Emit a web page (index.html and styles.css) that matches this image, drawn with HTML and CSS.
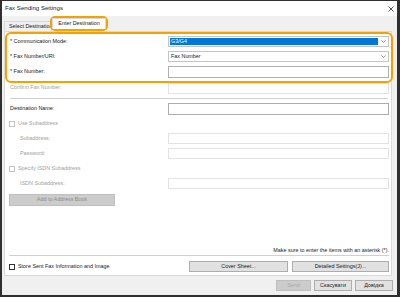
FILE: index.html
```html
<!DOCTYPE html>
<html lang="en">
<head>
    <meta charset="UTF-8">
    <title>Fax Sending Settings</title>
    <link rel="stylesheet" href="styles.css">
</head>
<body>
    <div class="window">
        <div class="titlebar">
            <span class="title">Fax Sending Settings</span>
            <svg class="close" width="6" height="6" viewBox="0 0 6 6">
                <path d="M0.5 0.5 L5.5 5.5 M5.5 0.5 L0.5 5.5" stroke="#444" stroke-width="0.9"/>
            </svg>
        </div>

        <div class="dialog">
            <div class="tabs">
                <div class="tab">Select Destination</div>
                <div class="tab-mark">
                    <div class="tab tab-active">Enter Destination</div>
                </div>
            </div>

            <div class="panel">
                <div class="mark-box">
                    <div class="row">
                        <span class="label">* Communication Mode:</span>
                        <div class="select select-focus">
                            <span class="select-value">G3/G4</span>
                            <svg class="arrow" width="5" height="3" viewBox="0 0 5 3"><path d="M0.3 0.3 L2.5 2.5 L4.7 0.3" fill="none" stroke="#777" stroke-width="0.7"/></svg>
                        </div>
                    </div>
                    <div class="row">
                        <span class="label">* Fax Number/URI:</span>
                        <div class="select">
                            <span class="select-value">Fax Number</span>
                            <svg class="arrow" width="5" height="3" viewBox="0 0 5 3"><path d="M0.3 0.3 L2.5 2.5 L4.7 0.3" fill="none" stroke="#777" stroke-width="0.7"/></svg>
                        </div>
                    </div>
                    <div class="row">
                        <span class="label">* Fax Number:</span>
                        <div class="input input-tall"></div>
                    </div>
                </div>

                <div class="section">
                    <div class="row row-confirm disabled">
                        <span class="label">Confirm Fax Number:</span>
                        <div class="input"></div>
                    </div>

                    <div class="sep"></div>

                    <div class="row">
                        <span class="label">Destination Name:</span>
                        <div class="input input-tall"></div>
                    </div>
                    <div class="row disabled">
                        <span class="check-label"><span class="checkbox"></span>Use Subaddress</span>
                    </div>
                    <div class="row disabled">
                        <span class="label label-sub">Subaddress:</span>
                        <div class="input"></div>
                    </div>
                    <div class="row disabled">
                        <span class="label label-sub">Password:</span>
                        <div class="input"></div>
                    </div>
                    <div class="row disabled">
                        <span class="check-label"><span class="checkbox"></span>Specify ISDN Subaddress</span>
                    </div>
                    <div class="row disabled">
                        <span class="label label-sub">ISDN Subaddress:</span>
                        <div class="input"></div>
                    </div>

                    <div class="btn btn-disabled btn-book">Add to Address Book</div>
                </div>

                <div class="footer">
                    <div class="note">Make sure to enter the items with an asterisk (*).</div>
                    <div class="sep sep-footer"></div>
                    <div class="footer-row">
                        <span class="check-label check-store"><span class="checkbox"></span>Store Sent Fax Information and Image</span>
                        <div class="btn btn-cover">Cover Sheet...</div>
                        <div class="btn btn-detail">Detailed Settings(J)...</div>
                    </div>
                </div>
            </div>

            <div class="dialog-buttons">
                <div class="btn btn-disabled btn-send">Send</div>
                <div class="btn btn-bottom">Скасувати</div>
                <div class="btn btn-bottom">Довідка</div>
            </div>
        </div>
    </div>
</body>
</html>
```

FILE: styles.css
```css
body {
    margin: 0;
    background: #2b2b2b;
    font-family: "Liberation Sans", Arial, sans-serif;
    font-size: 5.4px;
    line-height: 1;
    color: #1a1a1a;
}

.window {
    width: 400px;
    height: 297px;
    box-sizing: border-box;
    border-style: solid;
    border-color: #2f2f2f;
    border-width: 1px 3px 2px 2px;
    background: #f0f0f0;
    display: flex;
    flex-direction: column;
}

.titlebar {
    height: 15px;
    background: #fff;
    display: flex;
    align-items: center;
    justify-content: space-between;
    padding: 0 3px 0 3px;
}

.title {
    font-size: 6.1px;
    color: #222;
}

.close {
    display: block;
}

.dialog {
    flex: 1;
    display: flex;
    flex-direction: column;
    padding: 0 5px 0 2px;
}

/* tabs */
.tabs {
    height: 15px;
    display: flex;
    align-items: flex-end;
}

.tab {
    box-sizing: border-box;
    height: 10px;
    width: 48px;
    padding-left: 4px;
    border: 1px solid #d9d9d9;
    border-bottom: none;
    background: #f0f0f0;
    white-space: nowrap;
    overflow: hidden;
    display: flex;
    align-items: center;
}

.tab-mark {
    box-sizing: border-box;
    height: 15px;
    width: 58px;
    margin-left: -2px;
    border: 2px solid #f5a200;
    border-radius: 5px;
    position: relative;
    z-index: 2;
}

.tab-active {
    width: 54px;
    height: 11px;
    padding: 0;
    justify-content: center;
    background: #fff;
}

/* main panel */
.panel {
    box-sizing: border-box;
    height: 245px;
    background: #fff;
    border: 1px solid #d9d9d9;
    display: flex;
    flex-direction: column;
    padding-bottom: 3px;
}

.mark-box {
    box-sizing: border-box;
    margin-right: -2px;
    border: 2px solid #f5a200;
    border-radius: 6px;
    padding: 0 2px 2px 3px;
    position: relative;
    z-index: 1;
}

.section {
    padding: 0 2px 0 5px;
}

.row {
    height: 15px;
    display: flex;
    align-items: center;
}

.row-confirm {
    height: 12px;
    margin-top: -1px;
}

.label {
    flex: 1;
    white-space: nowrap;
}

.label-sub {
    padding-left: 10px;
}

.disabled {
    color: #a0a0a0;
}

.select,
.input {
    box-sizing: border-box;
    width: 221px;
    height: 11px;
    background: #fff;
}

.select {
    border: 1px solid #c4c4c4;
    display: flex;
    align-items: center;
    padding: 1px 2px 1px 1px;
}

.select-value {
    flex: 1;
    height: 100%;
    display: flex;
    align-items: center;
    padding-left: 1px;
}

.select-focus .select-value {
    background: #0078d7;
    color: #fff;
    margin-right: 3px;
}

.arrow {
    display: block;
}

.input {
    border: 1px solid #adadad;
}

.input-tall {
    height: 12px;
}

.disabled .input {
    border-color: #e3e3e3;
}

.sep {
    height: 1px;
    background: #d0d0d0;
    margin: 4px 1px 2px 0;
}

.check-label {
    display: flex;
    align-items: center;
    gap: 3px;
    margin-left: -1px;
    white-space: nowrap;
}

.checkbox {
    box-sizing: border-box;
    width: 6px;
    height: 6px;
    border: 1px solid #c2c2c2;
    background: #fff;
}

/* buttons */
.btn {
    box-sizing: border-box;
    height: 11px;
    display: flex;
    align-items: center;
    justify-content: center;
    background: #e1e1e1;
    border: 1px solid #adadad;
    white-space: nowrap;
}

.btn-disabled {
    background: #cccccc;
    border-color: #bfbfbf;
    color: #8d8d8d;
}

.btn-book {
    width: 106px;
    height: 12px;
    margin: 3px 0 0 -1px;
}

.footer {
    margin-top: auto;
    padding: 0 2px 0 5px;
}

.note {
    text-align: right;
    height: 8px;
    line-height: 8px;
}

.sep-footer {
    margin: 1px 0 5px -1px;
}

.footer-row {
    display: flex;
    align-items: center;
    gap: 4px;
}

.check-store {
    flex: 1;
}

.check-store .checkbox {
    border-color: #333;
}

.btn-cover {
    width: 99px;
}

.btn-detail {
    width: 97px;
}

.dialog-buttons {
    display: flex;
    justify-content: flex-end;
    gap: 3px;
    padding-top: 4px;
    margin-right: -1px;
}

.btn-send {
    width: 35px;
    color: #a8a8a8;
}

.btn-bottom {
    width: 38px;
}
```
